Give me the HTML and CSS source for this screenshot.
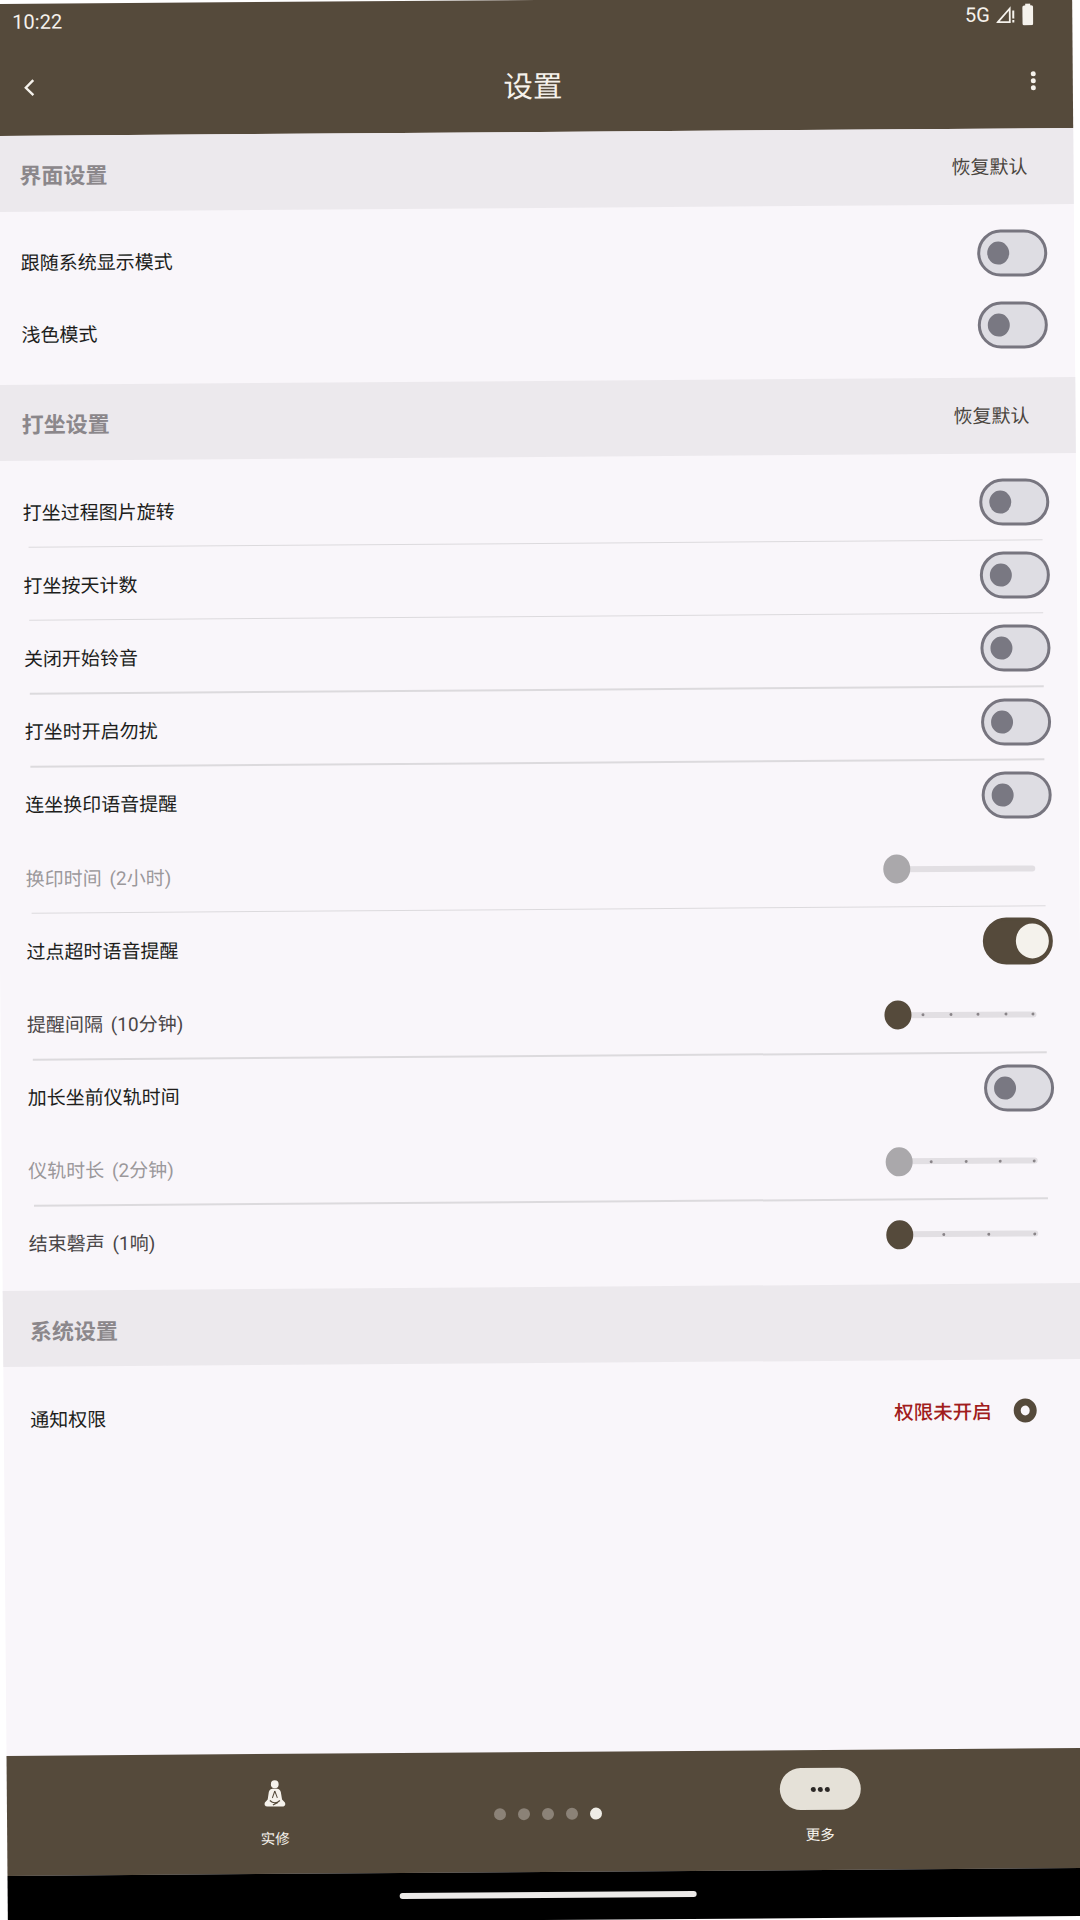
FILE: index.html
```html
<!DOCTYPE html>
<html lang="zh">
<head>
  <meta charset="UTF-8" />
  <title>设置</title>
  <link rel="stylesheet" href="styles.css">
</head>
<body>
  <div class="screen">
    <div class="top-bar">
      <div class="status-bar">
        <span class="time">10:22</span>
        <div class="status-icons">
          <span class="net">5G</span>
          <svg class="signal" width="19" height="18" viewBox="0 0 19 18">
            <path d="M1.5 16.5 L13.5 3 V16.5 Z" fill="none" stroke="#f5f2ec" stroke-width="1.8"/>
            <rect x="16" y="5" width="2" height="8" fill="#f5f2ec"/>
            <rect x="16" y="14.5" width="2" height="2.5" fill="#f5f2ec"/>
          </svg>
          <svg class="battery" width="11" height="22" viewBox="0 0 11 22">
            <rect x="3" y="0" width="5" height="3" fill="#f5f2ec"/>
            <rect x="0" y="2" width="11" height="20" rx="2" fill="#f5f2ec"/>
          </svg>
        </div>
      </div>
      <div class="toolbar">
        <svg class="back" width="11" height="18" viewBox="0 0 11 18">
          <path d="M9.5 1.5 L2 9 L9.5 16.5" fill="none" stroke="#f5f2ec" stroke-width="2.4"/>
        </svg>
        <h1>设置</h1>
        <div class="menu"><i></i><i></i><i></i></div>
      </div>
    </div>

    <div class="content">
      <div class="section-head">
        <h2>界面设置</h2>
        <span class="reset">恢复默认</span>
      </div>
      <div class="group group-first">
        <div class="row"><span>跟随系统显示模式</span><div class="toggle"><i></i></div></div>
        <div class="row"><span>浅色模式</span><div class="toggle"><i></i></div></div>
      </div>

      <div class="section-head">
        <h2>打坐设置</h2>
        <span class="reset">恢复默认</span>
      </div>
      <div class="group group-second">
        <div class="row line"><span>打坐过程图片旋转</span><div class="toggle"><i></i></div></div>
        <div class="row line"><span>打坐按天计数</span><div class="toggle"><i></i></div></div>
        <div class="row line"><span>关闭开始铃音</span><div class="toggle"><i></i></div></div>
        <div class="row line"><span>打坐时开启勿扰</span><div class="toggle"><i></i></div></div>
        <div class="row"><span>连坐换印语音提醒</span><div class="toggle"><i></i></div></div>
        <div class="row line off">
          <span>换印时间 (2小时)</span>
          <div class="slider off"><b></b><div class="track"></div></div>
        </div>
        <div class="row"><span>过点超时语音提醒</span><div class="toggle on"><i></i></div></div>
        <div class="row line soft">
          <span>提醒间隔 (10分钟)</span>
          <div class="slider"><b></b><div class="track steps-5"><i></i><i></i><i></i><i></i><i></i></div></div>
        </div>
        <div class="row"><span>加长坐前仪轨时间</span><div class="toggle"><i></i></div></div>
        <div class="row line off">
          <span>仪轨时长 (2分钟)</span>
          <div class="slider off"><b></b><div class="track steps-4"><i></i><i></i><i></i><i></i></div></div>
        </div>
        <div class="row soft">
          <span>结束磬声 (1响)</span>
          <div class="slider"><b></b><div class="track steps-3"><i></i><i></i><i></i></div></div>
        </div>
      </div>

      <div class="section-head section-low">
        <h2>系统设置</h2>
      </div>
      <div class="group group-third">
        <div class="row">
          <span>通知权限</span>
          <div class="permission">
            <strong>权限未开启</strong>
            <span class="radio"></span>
          </div>
        </div>
      </div>
    </div>

    <div class="bottom-nav">
      <div class="nav-item">
        <div class="nav-icon">
          <svg width="22" height="27" viewBox="0 0 22 27">
            <circle cx="11" cy="4.2" r="3.9" fill="#f5f2ec"/>
            <path d="M11 8.5 C7.5 8.5 5.5 9.5 5 12 L3.8 19.5 L1 22.5 C0 24.5 1 26.5 3.5 26.5 H18.5 C21 26.5 22 24.5 21 22.5 L18.2 19.5 L17 12 C16.5 9.5 14.5 8.5 11 8.5 Z" fill="#f5f2ec"/>
            <path d="M11 11 L8.5 18 M11 11 L13.5 18" stroke="#554a3b" stroke-width="1" fill="none"/>
            <path d="M6 20.5 C9 23.5 13 23.5 16 20.5 M9 25 L14 22.5" stroke="#554a3b" stroke-width="1.3" fill="none"/>
          </svg>
        </div>
        <span class="nav-label">实修</span>
      </div>
      <div class="page-dots"><i></i><i></i><i></i><i></i><i class="active"></i></div>
      <div class="nav-item">
        <div class="nav-icon pill"><i></i><i></i><i></i></div>
        <span class="nav-label">更多</span>
      </div>
    </div>

    <div class="gesture-bar"><div class="home-line"></div></div>
  </div>
</body>
</html>
```

FILE: styles.css
```css
html, body {
  margin: 0;
  padding: 0;
  background: #fff;
  overflow: hidden;
}
/* the whole shot is slightly tilted */
.screen {
  width: 1080px;
  height: 1920px;
  display: flex;
  flex-direction: column;
  transform: rotate(-0.42deg) skewX(0.05deg);
  background: #f9f6fa;
  color: #201d1b;
  font-family: Roboto, "Noto Sans CJK SC", sans-serif;
}

/* top */
.top-bar {
  height: 132px;
  background: #554a3b;
  color: #f5f2ec;
}
.status-bar {
  height: 36px;
  display: flex;
  align-items: center;
  justify-content: space-between;
  padding: 0 39px 0 20px;
  font-size: 20px;
}
.status-icons {
  display: flex;
  align-items: center;
  gap: 6px;
}
.signal { margin-right: 1.5px; }
.toolbar {
  height: 96px;
  display: flex;
  align-items: center;
  justify-content: space-between;
  padding: 0 37px 0 31px;
}
.toolbar h1 {
  margin: 6px 0 0;
  font-size: 29.5px;
  font-weight: 400;
  line-height: 40px;
}
.menu {
  display: flex;
  flex-direction: column;
  gap: 2px;
}
.menu i {
  width: 5px;
  height: 5px;
  border-radius: 50%;
  background: #f5f2ec;
}

/* sections */
.content {
  flex: 1;
}
.section-head {
  height: 76px;
  display: flex;
  align-items: center;
  justify-content: space-between;
  padding: 0 46px 0 26px;
  background: #ece9ed;
}
.section-head h2 {
  margin: 0;
  font-size: 22px;
  font-weight: 700;
  color: #8b878b;
}
.section-low h2 {
  margin: 2px 0 0 1px;
}
.reset {
  margin-bottom: 3px;
  font-size: 19px;
  color: #4a4540;
}
.group-first { padding: 12px 0 17px; }
.group-first .row { height: 72px; }
.group-second { padding: 12px 0 13px; }
.group-third { padding: 14px 0 0; }

.row {
  position: relative;
  height: 73.2px;
  display: flex;
  align-items: center;
  justify-content: space-between;
  padding: 0 27px 0 26.5px;
  font-size: 19px;
  word-spacing: 3px;
}
.row > span {
  margin-top: 3px;
}
.group-third .row > span {
  margin-top: 1px;
}
.row.line::after {
  content: "";
  position: absolute;
  left: 32px;
  right: 34px;
  bottom: -2px;
  height: 1.5px;
  background: #dcdadd;
}
.row.soft > span {
  color: #4a4648;
}
.row.off > span {
  color: #9b989b;
}

/* switches */
.toggle {
  box-sizing: border-box;
  width: 70px;
  height: 47px;
  display: flex;
  align-items: center;
  padding: 0 7px;
  border: 3px solid #77757f;
  border-radius: 24px;
  background: #dedde3;
}
.toggle i {
  width: 22px;
  height: 23px;
  border-radius: 50%;
  background: #797882;
}
.toggle.on {
  justify-content: flex-end;
  padding: 0 1px;
  border-color: #554a3b;
  background: #554a3b;
}
.toggle.on i {
  width: 33px;
  height: 35px;
  background: #f4f2ec;
}

/* sliders */
.slider {
  width: 152px;
  margin-right: 17px;
  display: flex;
  align-items: center;
}
.slider b {
  position: relative;
  z-index: 1;
  flex: none;
  width: 27px;
  height: 29px;
  border-radius: 50%;
  background: #554a3b;
}
.slider.off b {
  background: #aaa8ab;
}
.track {
  flex: 1;
  height: 6px;
  margin-left: -14px;
  padding-right: 2px;
  display: grid;
  align-items: center;
  justify-items: end;
  border-radius: 3px;
  background: #e2dfe3;
}
.steps-5 { grid-template-columns: repeat(5, 1fr); }
.steps-4 { grid-template-columns: repeat(4, 1fr); }
.steps-3 { grid-template-columns: repeat(3, 1fr); }
.track i {
  width: 3px;
  height: 3px;
  border-radius: 50%;
  background: #8a8589;
}

/* permission */
.permission {
  display: flex;
  align-items: center;
  gap: 22px;
  margin-right: 20px;
}
.permission strong {
  font-size: 19.5px;
  font-weight: 500;
  color: #a11d1d;
  word-spacing: 0;
}
.radio {
  box-sizing: border-box;
  width: 23px;
  height: 24px;
  border: 7px solid #554a3b;
  border-radius: 50%;
  background: #f9f6fa;
}

/* bottom */
.bottom-nav {
  height: 120px;
  display: grid;
  grid-template-columns: 536px 10px 1fr;
  background: #554a3b;
  color: #f5f2ec;
}
.nav-item {
  display: flex;
  flex-direction: column;
  align-items: center;
  padding-top: 18px;
}
.nav-icon {
  height: 42px;
  display: flex;
  align-items: center;
  justify-content: center;
}
.nav-icon.pill {
  width: 81px;
  gap: 2px;
  border-radius: 21px;
  background: #e5e1d8;
}
.pill i {
  width: 5px;
  height: 5px;
  border-radius: 50%;
  background: #2b2826;
}
.nav-label {
  margin-top: 16px;
  font-size: 14.5px;
  line-height: 20px;
}
.page-dots {
  justify-self: center;
  margin-top: 56px;
  height: 12px;
  display: flex;
  gap: 12px;
}
.page-dots i {
  flex: none;
  width: 12px;
  height: 12px;
  border-radius: 50%;
  background: #8b8277;
}
.page-dots i.active {
  background: #efece6;
}
.gesture-bar {
  flex: none;
  height: 48px;
  background: #000;
  display: flex;
  justify-content: center;
  padding-top: 20px;
  box-sizing: border-box;
}
.home-line {
  width: 297px;
  height: 6px;
  border-radius: 3px;
  background: #eceae8;
}
```
